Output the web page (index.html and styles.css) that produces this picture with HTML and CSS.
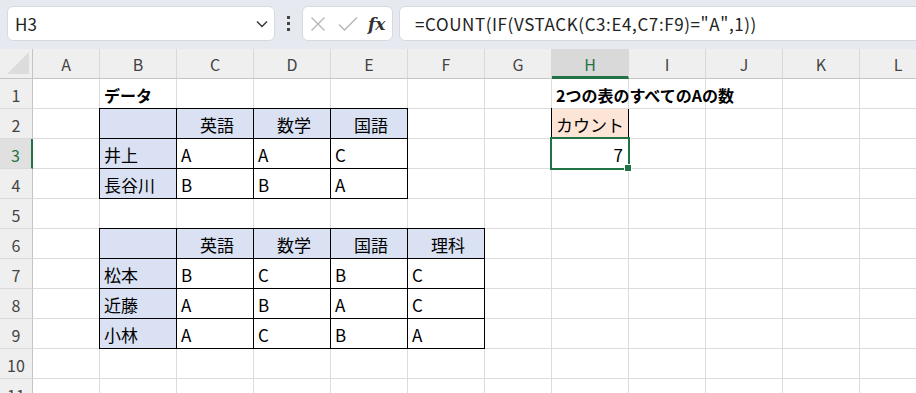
FILE: index.html
```html
<!DOCTYPE html>
<html lang="ja">
<head>
<meta charset="utf-8">
<link rel="stylesheet" href="styles.css">
</head>
<body>
<div class="toolbar">
  <div class="namebox">
    <span class="name">H3</span>
    <svg class="chev" width="12" height="8" viewBox="0 0 12 8"><path d="M1 1.5 L6 6.5 L11 1.5" fill="none" stroke="#333" stroke-width="1.4"/></svg>
  </div>
  <div class="dots"><i></i><i></i><i></i></div>
  <div class="fxbox">
    <svg width="16" height="16" viewBox="0 0 16 16"><path d="M1.5 1.5 L14.5 14.5 M14.5 1.5 L1.5 14.5" stroke="#b4b4b4" stroke-width="1.3" fill="none"/></svg>
    <svg width="20" height="16" viewBox="0 0 20 16"><path d="M1 8.5 L6.5 14 L19 1.5" stroke="#b4b4b4" stroke-width="1.3" fill="none"/></svg>
    <span class="fx">fx</span>
  </div>
  <div class="formula">=COUNT(IF(VSTACK(C3:E4,C7:F9)="A",1))</div>
</div>
<div class="sheet">
  <div class="corner"><span class="tri"></span></div>
  <div class="ch">A</div><div class="ch">B</div><div class="ch">C</div><div class="ch">D</div><div class="ch">E</div><div class="ch">F</div><div class="ch">G</div><div class="ch sel">H</div><div class="ch">I</div><div class="ch">J</div><div class="ch">K</div><div class="ch">L</div>

  <div class="rh">1</div><div class="c"></div><div class="c bold">データ</div><div class="c"></div><div class="c"></div><div class="c"></div><div class="c"></div><div class="c"></div><div class="c bold ov">2つの表のすべてのAの数</div><div class="c"></div><div class="c"></div><div class="c"></div><div class="c"></div>

  <div class="rh">2</div><div class="c"></div><div class="c bx blue"></div><div class="c bx blue ctr">英語</div><div class="c bx blue ctr">数学</div><div class="c bx blue ctr">国語</div><div class="c"></div><div class="c"></div><div class="c bx orange">カウント</div><div class="c"></div><div class="c"></div><div class="c"></div><div class="c"></div>

  <div class="rh rsel">3</div><div class="c"></div><div class="c bx blue">井上</div><div class="c bx">A</div><div class="c bx">A</div><div class="c bx">C</div><div class="c"></div><div class="c"></div><div class="c num active">7<span class="handle"></span></div><div class="c"></div><div class="c"></div><div class="c"></div><div class="c"></div>

  <div class="rh">4</div><div class="c"></div><div class="c bx blue">長谷川</div><div class="c bx">B</div><div class="c bx">B</div><div class="c bx">A</div><div class="c"></div><div class="c"></div><div class="c"></div><div class="c"></div><div class="c"></div><div class="c"></div><div class="c"></div>

  <div class="rh">5</div><div class="c"></div><div class="c"></div><div class="c"></div><div class="c"></div><div class="c"></div><div class="c"></div><div class="c"></div><div class="c"></div><div class="c"></div><div class="c"></div><div class="c"></div><div class="c"></div>

  <div class="rh">6</div><div class="c"></div><div class="c bx blue"></div><div class="c bx blue ctr">英語</div><div class="c bx blue ctr">数学</div><div class="c bx blue ctr">国語</div><div class="c bx blue ctr">理科</div><div class="c"></div><div class="c"></div><div class="c"></div><div class="c"></div><div class="c"></div><div class="c"></div>

  <div class="rh">7</div><div class="c"></div><div class="c bx blue">松本</div><div class="c bx">B</div><div class="c bx">C</div><div class="c bx">B</div><div class="c bx">C</div><div class="c"></div><div class="c"></div><div class="c"></div><div class="c"></div><div class="c"></div><div class="c"></div>

  <div class="rh">8</div><div class="c"></div><div class="c bx blue">近藤</div><div class="c bx">A</div><div class="c bx">B</div><div class="c bx">A</div><div class="c bx">C</div><div class="c"></div><div class="c"></div><div class="c"></div><div class="c"></div><div class="c"></div><div class="c"></div>

  <div class="rh">9</div><div class="c"></div><div class="c bx blue">小林</div><div class="c bx">A</div><div class="c bx">C</div><div class="c bx">B</div><div class="c bx">A</div><div class="c"></div><div class="c"></div><div class="c"></div><div class="c"></div><div class="c"></div><div class="c"></div>

  <div class="rh">10</div><div class="c"></div><div class="c"></div><div class="c"></div><div class="c"></div><div class="c"></div><div class="c"></div><div class="c"></div><div class="c"></div><div class="c"></div><div class="c"></div><div class="c"></div><div class="c"></div>

  <div class="rh">11</div><div class="c"></div><div class="c"></div><div class="c"></div><div class="c"></div><div class="c"></div><div class="c"></div><div class="c"></div><div class="c"></div><div class="c"></div><div class="c"></div><div class="c"></div><div class="c"></div>
</div>
</body>
</html>
```

FILE: styles.css
```css
html, body {
  margin: 0;
  padding: 0;
  width: 916px;
  height: 393px;
  overflow: hidden;
  background: #fff;
  font-family: "Noto Sans CJK JP", "Noto Sans", sans-serif;
  color: #000;
}

.toolbar {
  height: 49px;
  box-sizing: border-box;
  background: #e6e9ef;
  display: flex;
  align-items: flex-start;
  padding: 6px 0 0 7px;
  overflow: hidden;
}

.namebox {
  width: 268px;
  height: 35px;
  box-sizing: border-box;
  background: #fff;
  border: 1px solid #d6d9de;
  border-radius: 6px;
  display: flex;
  align-items: center;
  justify-content: space-between;
  padding: 0 6px 0 7px;
  flex: none;
}

.name {
  font-size: 17px;
  color: #222;
}

.chev { margin-top: 1px; }

.dots {
  width: 27px;
  height: 35px;
  display: flex;
  flex-direction: column;
  align-items: center;
  justify-content: center;
  gap: 3px;
  flex: none;
}
.dots i {
  display: block;
  width: 3px;
  height: 3px;
  background: #444;
}

.fxbox {
  width: 91px;
  height: 35px;
  box-sizing: border-box;
  background: #fff;
  border: 1px solid #d6d9de;
  border-radius: 6px;
  display: flex;
  align-items: center;
  padding: 0 0 0 7px;
  gap: 12px;
  flex: none;
}

.fx {
  font-family: "DejaVu Serif", "Liberation Serif", serif;
  font-style: italic;
  font-weight: bold;
  font-size: 17px;
  color: #333;
  margin-left: -2px;
}

.formula {
  margin-left: 6px;
  height: 35px;
  width: 560px;
  flex: none;
  box-sizing: border-box;
  background: #fff;
  border: 1px solid #d6d9de;
  border-radius: 6px;
  display: flex;
  align-items: center;
  padding: 0 0 0 15px;
  font-size: 17px;
  letter-spacing: 0.6px;
  color: #222;
  white-space: nowrap;
}

.sheet {
  display: grid;
  grid-template-columns: 33px 67px 77px 77px 77px 77px 77px 67px 77px 77px 77px 77px 77px;
  grid-auto-rows: 30px;
  width: 937px;
}

.sheet > div {
  box-sizing: border-box;
  position: relative;
}

.corner {
  background: #efefef;
  border-right: 1px solid #c4c4c4;
  border-bottom: 1px solid #c4c4c4;
}
.tri {
  position: absolute;
  right: 3px;
  bottom: 4px;
  width: 0;
  height: 0;
  border-left: 22px solid transparent;
  border-bottom: 22px solid #dcdcdc;
}

.ch {
  background: #efefef;
  border-right: 1px solid #d9d9d9;
  border-bottom: 1px solid #c4c4c4;
  display: flex;
  align-items: center;
  justify-content: center;
  font-size: 16px;
  color: #444;
  padding-top: 1px;
}
.ch.sel {
  background: #d9d9d9;
  color: #217346;
  border-bottom: 3px solid #217346;
  padding-top: 3px;
}

.rh {
  background: #efefef;
  border-right: 1px solid #c4c4c4;
  border-bottom: 1px solid #d9d9d9;
  display: flex;
  align-items: center;
  justify-content: center;
  font-size: 16px;
  color: #444;
  padding-top: 2px;
}
.rh.rsel {
  background: #e0e0e0;
  color: #217346;
  border-right: 2px solid #217346;
}

.c {
  border-right: 1px solid #dcdcdc;
  border-bottom: 1px solid #dcdcdc;
  display: flex;
  align-items: center;
  padding: 2px 0 0 4px;
  font-size: 17px;
  white-space: nowrap;
  color: #000;
}

.bold { font-weight: bold; font-size: 16px; }
.ov { overflow: visible; z-index: 1; }

.ctr { justify-content: center; }
.num { justify-content: flex-end; padding-right: 5px; }

.blue { background: #d9e1f2; }
.orange { background: #fce4d6; }

.bx::after {
  content: "";
  position: absolute;
  inset: -1px;
  border: 1px solid #000;
  pointer-events: none;
}

.active::after {
  content: "";
  position: absolute;
  inset: -2px;
  border: 2px solid #217346;
  pointer-events: none;
  z-index: 2;
}

.handle {
  position: absolute;
  right: -4px;
  bottom: -4px;
  width: 6px;
  height: 6px;
  background: #217346;
  border: 1px solid #fff;
  z-index: 3;
}
```
